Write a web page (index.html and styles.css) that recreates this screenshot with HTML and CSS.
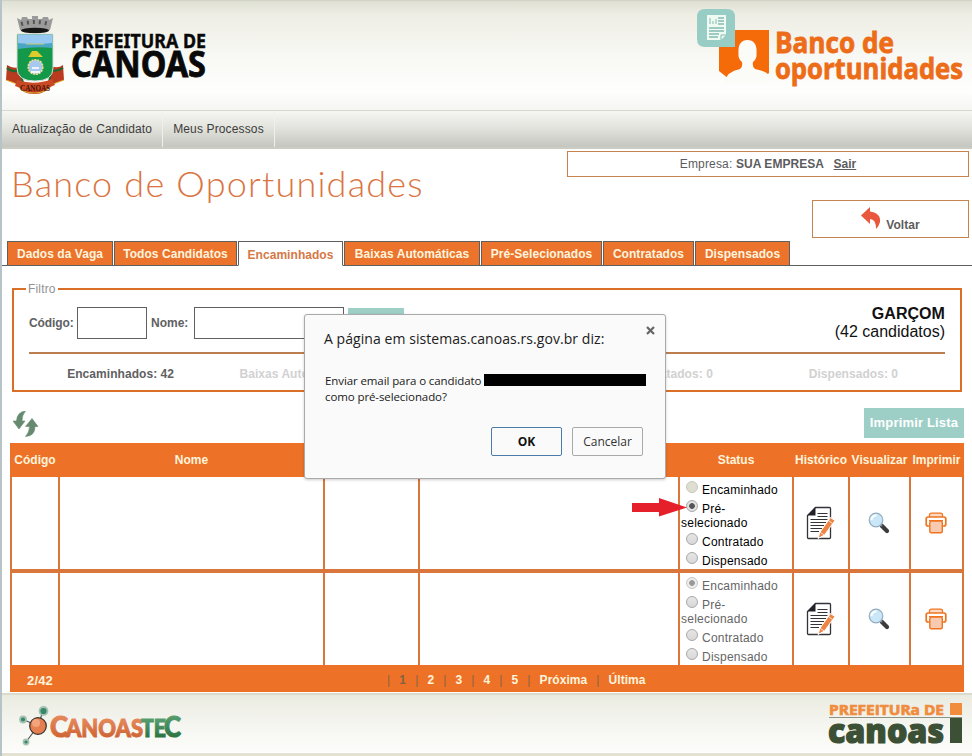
FILE: index.html
```html
<!DOCTYPE html>
<html lang="pt-BR">
<head>
<meta charset="utf-8">
<title>Banco de Oportunidades</title>
<link rel="stylesheet" href="styles.css">
</head>
<body>
<svg class="symbols" width="0" height="0">
  <defs>
    <linearGradient id="orangeText" x1="0" y1="0" x2="0" y2="1"><stop offset="0" stop-color="#ee9468"/><stop offset="1" stop-color="#c95c2c"/></linearGradient>
    <linearGradient id="greenText" x1="0" y1="0" x2="0" y2="1"><stop offset="0" stop-color="#66ab7e"/><stop offset="1" stop-color="#246a38"/></linearGradient>
    <symbol id="notes" viewBox="0 0 30 34">
      <path d="M9.500 1.500H23.500q1 0 1 1V31.500q0 1-1 1H2.500q-1 0-1-1V9.500Z" fill="#fff" stroke="#333338" stroke-width="1.300"/>
      <path d="M1.500 9.500 9.500 1V9.500Z" fill="#222229"/>
      <path d="M11.500 7.500H21.500M11.500 10.500H21.500M4.500 13.500H21.500M4.500 16.500H20M4.500 19.500H18M4.500 22.500H16M4.500 25.500H13" stroke="#333338" stroke-width="1.200"/>
      <path d="M12 32.500 14 26 24.500 11.500 29 14.500 18.500 29Z" fill="#ee8545" stroke="#fff"/>
      <path d="M22.500 14.500 26.500 17.500M14 26l4 3" stroke="#fff" stroke-width=".8"/>
    </symbol>
    <symbol id="lens" viewBox="0 0 22 22">
      <path d="M14 14 19 19" stroke="#3b3b3e" stroke-width="4.200" stroke-linecap="round"/>
      <path d="M12 12l2 2" stroke="#888" stroke-width="2"/>
      <circle cx="8" cy="8" r="6.800" fill="#c9e7f6" stroke="#93abc0" stroke-width="1.200"/>
      <path d="M3.500 8a4.500 4.500 0 0 1 5-4.500" stroke="#fff" stroke-width="2" fill="none"/>
    </symbol>
    <symbol id="printer" viewBox="0 0 22 22">
      <path d="M4.500 5V3q0-1.800 2-1.800h9q2 0 2 1.800v2" fill="#fbd9c3" stroke="#ee7420" stroke-width="1.300"/>
      <path d="M4.500 14H3q-1.800 0-1.800-2V7Q1.200 5 3.200 5H18.800q2 0 2 2v5q0 2-1.800 2h-1.500" fill="#fff" stroke="#ee7420" stroke-width="1.700"/>
      <rect x="4.800" y="9" width="12.500" height="11.800" rx="1.500" fill="#f8cbb0" stroke="#ee7420" stroke-width="1.400"/>
      <path d="M4 8.500h14" stroke="#ee7420"/>
    </symbol>
  </defs>
</svg>
<div class="page">
  <header class="header">
    <svg class="logo-city" width="206" height="92" viewBox="4 10 206 92">
      <path d="M17 18l4 2 1-3h5l1 2 4 0 0-3h6l0 3 4 0 1-2h5l1 3 4-2-3 12q-16 4-30 0Z" fill="#9b9b9b"/>
      <path d="M21 24q14-4 28 0" fill="none" stroke="#555" stroke-width="4" stroke-dasharray="2 4"/>
      <ellipse cx="35" cy="30.500" rx="14" ry="2.800" fill="#151515"/>
      <path d="M7 65q6 4 12 2l3 14q14 6 27 0l2-15q7 3 12-1l1 15-11 4q-8 10-18 10-14 0-18-10L6 80Z" fill="#b93a1f"/>
      <path d="M7 68q5 5 13 2l3 13M63 68q-6 4-12 2l-2 13" stroke="#1d6a2e" stroke-width="2" fill="none"/>
      <path d="M6 80l11 4q4 9 17 9t19-9l11-4" stroke="#e0ac2c" fill="none"/>
      <path d="M17 34H53V68q0 13-18 13T17 68Z" fill="#14994a" stroke="#d9dfd8"/>
      <path d="M18 34.500H52.500V45H18Z" fill="#97c8f2"/>
      <path d="M18 43q17 2 34 0v5q-16-2-34 1Z" fill="#49a7c4"/>
      <path d="M26 44h18" stroke="#c7cf75"/>
      <path d="M29 56l3-5 5 0 3 3 3 3H28Z" fill="#dccc2b"/>
      <circle cx="35.500" cy="67" r="7.300" fill="#a8c9ef" stroke="#f0df84" stroke-width="1.600" stroke-dasharray="2 1"/>
      <path d="M31 72h9M32 68h7" stroke="#eef5ff" stroke-width="2"/>
      <path d="M17 80q18 6 35-1l3 6q-19 9-40 1Z" fill="#c94924"/>
      <text x="20" y="91" class="ribbon" textLength="30" lengthAdjust="spacingAndGlyphs">CANOAS</text>
      <text x="71" y="47.500" class="city-top" textLength="135" lengthAdjust="spacingAndGlyphs">PREFEITURA DE</text>
      <text x="71" y="77" class="city-name" textLength="135" lengthAdjust="spacingAndGlyphs">CANOAS</text>
    </svg>
    <svg class="logo-bank" width="272" height="84" viewBox="694 6 272 84">
      <path d="M719 30H769V73L762 79 749 69 729 79 719 71Z" fill="#f56a09"/>
      <path d="M724 83Q727 71 740 69 743 67 742 62 738 59 738.500 54 737.500 40 747.500 40 757.500 40 756.500 54 757 59 753 62 752 67 755 69 766 71 769 75V83Z" fill="#fbfbf8"/>
      <path d="M705 9h22q8 0 8 8v30h-30q-8 0-8-8V17q0-8 8-8Z" fill="#97cdc4"/>
      <path d="M707 15h19v20l-5 5h-14Z" fill="#effaf3"/>
      <path d="M718 18h6M718 21h6M718 24h6M709 28h15M709 31h15M709 34h10M709 37h9" stroke="#83bbb1" stroke-width="1.300"/>
      <path d="M710 18v6M713 21v3M716 19v5M721 40v-5h5" stroke="#83bbb1" fill="none"/>
      <text x="775" y="53" class="bank" textLength="119" lengthAdjust="spacingAndGlyphs">Banco de</text>
      <text x="775" y="78.500" class="bank" textLength="188" lengthAdjust="spacingAndGlyphs">oportunidades</text>
    </svg>
  </header>
  <nav class="nav"><a>Atualização de Candidato</a><a>Meus Processos</a></nav>
  <main class="main">
    <section class="intro">
      <h1>Banco de Oportunidades</h1>
      <div class="account">
        <div class="company">Empresa: <b>SUA EMPRESA</b> <a>Sair</a></div>
        <div class="back"><svg width="20" height="23" viewBox="0 0 20 23"><path d="M0 8.500 9 0V4.500Q20 6 19 15 18 19 15 22 15 12 9 12V17Z" fill="#e9583c"/></svg><b>Voltar</b></div>
      </div>
    </section>
    <div class="tabs"><a>Dados da Vaga</a><a>Todos Candidatos</a><a class="active">Encaminhados</a><a>Baixas Automáticas</a><a>Pré-Selecionados</a><a>Contratados</a><a>Dispensados</a></div>
    <fieldset class="filter">
      <legend>Filtro</legend>
      <div class="search">
        <label>Código:</label><span class="field code"></span><label class="name-label">Nome:</label><span class="field name"></span><span class="search-button"></span>
        <div class="job"><b>GARÇOM</b><br>(42 candidatos)</div>
      </div>
      <div class="stats"><span class="on">Encaminhados: 42</span><span>Baixas Automáticas: 0</span><span>Pré-Selecionados: 0</span><span>Contratados: 0</span><span>Dispensados: 0</span></div>
    </fieldset>
    <div class="tools">
      <svg width="26" height="26" viewBox="0 0 26 26"><path d="M12.500 0Q4 1 3.500 10H0L6 18 12 10H9Q9 4 12.500 0ZM12.500 15.500 19 7.500 25 15.500H22Q22 25 12.500 25.500 16.500 21 16.500 15.500Z" fill="#658a70" stroke="#658a70" stroke-width=".6"/></svg>
      <a class="print-list">Imprimir Lista</a>
    </div>
    <div class="grid">
      <div class="row head"><span>Código</span><span>Nome</span><span></span><span></span><span>Status</span><span>Histórico</span><span>Visualizar</span><span>Imprimir</span></div>
      <div class="row body">
        <div></div><div></div><div></div><div></div>
        <div class="status">
          <p><i class="radio tan"></i>Encaminhado</p><p class="wrap"><i class="radio dot"></i>Pré-<br>selecionado</p><p><i class="radio"></i>Contratado</p><p><i class="radio"></i>Dispensado</p>
          <svg class="pointer" width="55" height="19" viewBox="0 0 55 19"><path d="M0 5H27V0L55 9.500 27 18.500V14H0Z" fill="#e5202b"/></svg>
        </div>
        <div class="icon notes"><svg width="30" height="34"><use href="#notes"/></svg></div><div class="icon"><svg width="22" height="22"><use href="#lens"/></svg></div><div class="icon"><svg width="22" height="22"><use href="#printer"/></svg></div>
      </div>
      <div class="row body second">
        <div></div><div></div><div></div><div></div>
        <div class="status">
          <p><i class="radio dot pale"></i>Encaminhado</p><p class="wrap"><i class="radio"></i>Pré-<br>selecionado</p><p><i class="radio"></i>Contratado</p><p><i class="radio"></i>Dispensado</p>
        </div>
        <div class="icon notes"><svg width="30" height="34"><use href="#notes"/></svg></div><div class="icon"><svg width="22" height="22"><use href="#lens"/></svg></div><div class="icon"><svg width="22" height="22"><use href="#printer"/></svg></div>
      </div>
      <div class="pager"><span class="count">2/42</span><span class="links"><i>|</i><em>1</em><i>|</i><b>2</b><i>|</i><b>3</b><i>|</i><b>4</b><i>|</i><b>5</b><i>|</i><b>Próxima</b><i>|</i><b>Última</b></span></div>
    </div>
  </main>
  <footer class="footer">
    <svg width="164" height="42" viewBox="18 704 164 42">
      <path d="M43 711 38 726 22 719M38 726 26 742" stroke="#555" stroke-width="1.200" fill="none"/>
      <circle cx="38" cy="726" r="8.300" fill="#e57f50" stroke="#36302c" stroke-width="1.200"/><circle cx="36" cy="723" r="4" fill="#f3a47e"/>
      <g fill="#368868" stroke="#a3c2b2" stroke-width="1.800"><circle cx="43.500" cy="711" r="4"/><circle cx="23" cy="719.500" r="3"/><circle cx="26" cy="742" r="2.500"/></g>
      <g class="tech"><text x="50" y="736.500" class="warm" font-size="28" textLength="18" lengthAdjust="spacingAndGlyphs">C</text><text x="66" y="736.500" class="warm" font-size="24" textLength="77" lengthAdjust="spacingAndGlyphs">ANOAS</text><text x="141" y="736.500" class="cool" font-size="24" textLength="25" lengthAdjust="spacingAndGlyphs">TE</text><text x="164" y="736.500" class="cool" font-size="28" textLength="17" lengthAdjust="spacingAndGlyphs">C</text></g>
    </svg>
    <svg class="foot-city" width="136" height="44" viewBox="828 702 136 44">
      <text x="829" y="714.500" class="foot-top" textLength="115" lengthAdjust="spacingAndGlyphs">PREFEITURa DE</text>
      <path d="M829 717.500H962" stroke="#8c9284"/>
      <text x="828" y="742.500" class="foot-name" textLength="116" lengthAdjust="spacingAndGlyphs">canoas</text>
      <path d="M950 703H962V715H950Z" fill="#f18c3c"/><path d="M950 718H962V743H950Z" fill="#3b5034"/>
    </svg>
  </footer>
  <div class="dialog">
    <svg class="close" width="9" height="9" viewBox="0 0 9 9"><path d="M1 1 8 8M8 1 1 8" stroke="#666" stroke-width="2.200"/></svg>
    <h2>A página em sistemas.canoas.rs.gov.br diz:</h2>
    <p>Enviar email para o candidato <span class="redacted"></span><br>como pré-selecionado?</p>
    <div class="actions"><button class="ok">OK</button><button>Cancelar</button></div>
  </div>
</div>
</body>
</html>
```
FILE: styles.css
```css
* { box-sizing: border-box; }
body { margin: 0; background: #e4e1d3; font: 12px "Liberation Sans", sans-serif; color: #606062; letter-spacing: .17px; overflow: hidden; }
b { letter-spacing: .05px; }
.symbols { display: block; height: 0; }
.page { position: relative; width: 972px; height: 756px; padding-bottom: 3px; border-left: 2px solid #b7c3c6; display: flex; flex-direction: column; }
.header { height: 110px; border-top: 1px solid #d3d4c7; background: linear-gradient(#dfe0d4, #eeeee5 14px, #f8f8f4 55px, #fefefd 90px, #f5f5f2); display: flex; justify-content: space-between; padding: 9px 6px 0 2px; }
.logo-bank { margin-top: -4px; }
.ribbon { font: bold 8px "Liberation Serif", serif; fill: #421208; letter-spacing: 0; }
.city-top { font: bold 19px "Noto Sans", sans-serif; fill: #090909; stroke: #090909; stroke-width: .4; letter-spacing: 0; }
.city-name { font: bold 36px "Noto Sans", sans-serif; fill: #090909; stroke: #090909; stroke-width: .8; letter-spacing: 0; }
.bank { font: bold 29px "Open Sans", sans-serif; fill: #ed6c18; stroke: #ed6c18; stroke-width: .8; letter-spacing: 0; }
.nav { height: 39px; border-top: 1px solid #d8d8d1; border-bottom: 2px solid #cbccc2; background: linear-gradient(#f6f6f2, #e3e4de 45%, #c5c6bf); display: flex; }
.nav a { padding: 11px 10px 0; color: #3c3c3c; border-right: 1px solid #f0f0e9; letter-spacing: .14px; }
.main { height: 544px; background: #fff; }
.intro { height: 92px; display: flex; justify-content: space-between; padding: 2px 3px 0 9px; }
h1 { margin: 10px 0 0; font: 300 36px/44px Lato, sans-serif; color: #da7442; letter-spacing: 1.2px; }
.account { display: flex; flex-direction: column; align-items: flex-end; gap: 23px; color: #5c5c5e; }
.company { width: 402px; height: 26px; border: 1px solid #c58350; line-height: 24px; text-align: center; }
.company a { font-weight: bold; text-decoration: underline; margin-left: 6px; letter-spacing: 0; }
.back { width: 157px; height: 38px; border: 1px solid #c58350; display: flex; justify-content: center; gap: 5px; padding-top: 6px; }
.back b { padding-top: 11px; }
.tabs { height: 25px; padding-left: 5px; border-bottom: 1px solid #606060; display: grid; grid-template-columns: 106px 123px 105px 136px 121px 91px 95px; gap: 1px; letter-spacing: .05px; }
.tabs a { height: 25px; border: 1px solid #606060; background: #eb732c; color: #fff5df; font-weight: bold; text-align: center; line-height: 24px; }
.tabs .active { background: #fff; color: #d57846; border-bottom-color: #fff; line-height: 26px; }
.filter { margin: 16px 0 0 10px; padding: 0 15px; width: 950px; height: 110px; border: 2px solid #da7028; }
.filter legend { margin-left: -3px; padding: 0 2px; height: 14px; color: #929292; }
.search { display: flex; height: 58px; border-bottom: 2px solid #bd7e4f; padding-top: 11px; font-weight: bold; letter-spacing: 0; }
.search label { padding-top: 9px; }
.search label:first-child { width: 44px; letter-spacing: -.1px; }
.search .field { height: 32px; border: 1px solid #606062; background: #fff; }
.code { width: 70px; margin-left: 4px; }
.name { width: 150px; margin-left: 4px; }
.search .name-label { margin-left: 4px; width: 39px; }
.search-button { width: 56px; height: 30px; margin: 1px 0 0 4px; background: #9dcfc7; }
.job { margin: -2px 0 0 auto; font: 16px/18px "Liberation Sans", sans-serif; text-align: right; color: #111; letter-spacing: 0; }
.stats { display: grid; grid-template-columns: repeat(5, 1fr); text-align: center; color: #d1d1d1; font-weight: bold; padding-top: 13px; letter-spacing: .05px; }
.stats span { white-space: nowrap; }
.stats .on { color: #606062; }
.tools { height: 51px; display: flex; justify-content: space-between; padding: 16px 8px 0 11px; }
.tools svg { margin-top: 3px; }
.print-list { width: 100px; height: 30px; background: #9dcfc7; color: #fff; font: bold 13px/29px "Liberation Sans", sans-serif; text-align: center; }
.grid { margin-left: 8px; width: 954px; background: #ed7228; }
.row { display: grid; grid-template-columns: 46px 263px 93px 258px 112px 54px 59px 51px; gap: 2px; padding: 0 2px; }
.head { height: 34px; color: #fff4dc; font-weight: bold; text-align: center; line-height: 34px; }
.head span { display: flex; justify-content: center; white-space: nowrap; letter-spacing: 0; }
.body { height: 92px; grid-template-rows: 92px; background: #d9763b; }
.body > div { background: #fff; }
.second { height: 96px; padding-top: 4px; }
.status { position: relative; padding: 3px 0 0 1px; color: #000; line-height: 14px; letter-spacing: .23px; }
.second .status { color: #656565; }
.status p { margin: 0; height: 19px; padding-top: 2px; }
.status .wrap { height: 33px; }
.radio { display: inline-block; width: 12px; height: 12px; margin: 0 4px 0 5px; border: 1px solid #a8a8a8; border-radius: 50%; background: linear-gradient(#e6e6e6, #d8d8d8); vertical-align: 1px; margin-top: -1px; }
.radio.tan { background: #dfdfd1; border-color: #c8c8bd; }
.radio.dot { background: radial-gradient(circle, #555 0 2.500px, #e2e2e2 3.200px); }
.radio.pale { background: radial-gradient(circle, #999 0 2.500px, #eee 3.200px); border-color: #c4c4c4; }
.pointer { position: absolute; left: -48px; top: 21px; }
.icon { display: flex; align-items: center; justify-content: center; padding-right: 2px; }
.body .notes { padding: 0; }
.pager { height: 27px; display: flex; color: #fff4dc; line-height: 31px; }
.count { width: 377px; padding-left: 17px; font-weight: bold; font-size: 13px; }
.links { display: flex; gap: 9px; line-height: 30px; }
.links i, .links em { font-style: normal; color: #876242; }
.links em { font-weight: bold; }
.footer { height: 60px; border-top: 2px solid #d9dbcf; border-bottom: 1px solid #fff; background: linear-gradient(#eaebe0, #f5f5f0 50%, #fcfcfa); display: flex; justify-content: space-between; padding: 9px 8px 0 16px; }
.foot-city { margin-top: -2px; }
.tech { font-family: Lato, sans-serif; font-weight: 900; letter-spacing: 0; stroke-width: 1; }
.warm { fill: url(#orangeText); stroke: url(#orangeText); }
.cool { fill: url(#greenText); stroke: url(#greenText); }
.foot-top { font: bold 14px "Open Sans", sans-serif; fill: #f08c3d; stroke: #f08c3d; stroke-width: .7; letter-spacing: 0; }
.foot-name { font: 800 33px "Open Sans", sans-serif; fill: #3b5034; stroke: #3b5034; stroke-width: 1.200; letter-spacing: 0; }
.dialog { position: absolute; left: 302px; top: 314px; width: 362px; height: 165px; padding: 14px 19px 0 20px; background: #fafafa; border: 1px solid #aaa; border-radius: 3px; box-shadow: 0 1px 3px #0003; color: #202020; letter-spacing: 0; }
.close { position: absolute; right: 10px; top: 11px; }
.dialog h2 { margin: 0 0 0 -1px; font: 14px/20px "Open Sans", sans-serif; letter-spacing: .06px; white-space: nowrap; }
.dialog p { margin: 24px 0 0; font: 11.500px/16px "Open Sans", sans-serif; letter-spacing: -.1px; white-space: nowrap; }
.redacted { display: inline-block; width: 162px; height: 12px; background: #000; vertical-align: -1px; }
.actions { display: flex; justify-content: flex-end; gap: 10px; margin: 22px 3px 0 0; }
.actions button { width: 71px; height: 29px; padding: 0; border: 1px solid #a9a9a9; border-radius: 2px; background: #fafafa; color: #333; font: 12px "Open Sans", sans-serif; }
.actions .ok { border-color: #4b7ba8; font-weight: bold; color: #111; }
```
